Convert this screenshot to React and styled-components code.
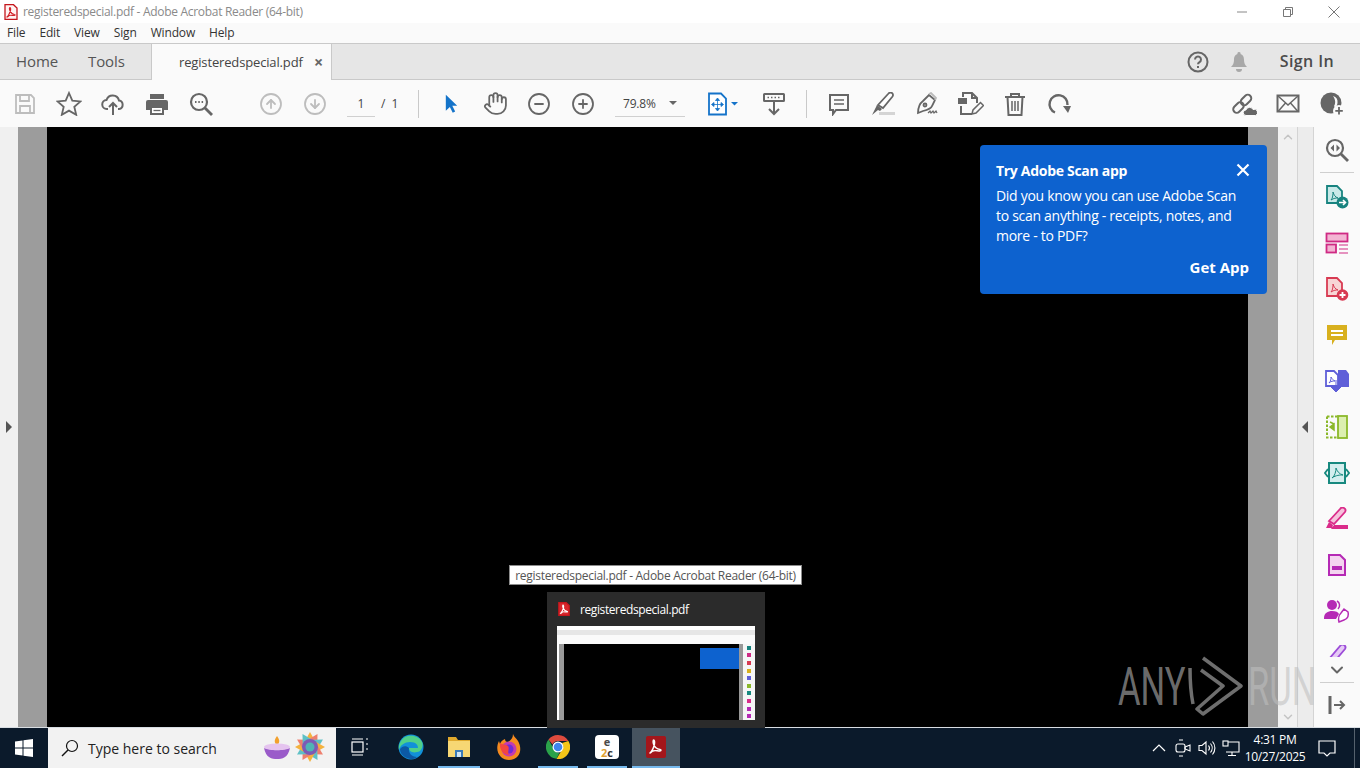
import React from "react";
import styled, { createGlobalStyle } from "styled-components";
import { Hand, CircleMinus, CirclePlus, CircleArrowUp, CircleArrowDown, ChevronUp, ChevronDown } from "lucide-react";

const GlobalStyle = createGlobalStyle`
  html, body { margin: 0; padding: 0; overflow: hidden; background: #000; }
  * { box-sizing: border-box; }
  body { font-family: "Open Sans", "Noto Sans", sans-serif; }
`;

const menuItems = ["File", "Edit", "View", "Sign", "Window", "Help"];

function PdfFile({ size = 16, solid }) {
  const mark = solid ? "#fff" : "#d2232a";
  return (
    <svg width={size} height={size} viewBox="0 0 16 16">
      <path d="M2 .7h8.5L14 4v11.3H2z" fill={solid ? "#d8262c" : "#fff3f2"} stroke="#c4161c" strokeWidth="1.3" />
      <path d="M4 13c1.500-1 2.500-3.500 3.500-6.500.3-1.500 0-3-.6-3s-.6 1.500 0 3c.8 2 2 3.500 4.500 4 .8 0 1 1-.2 1-2 0-4-.7-5 .1-1 .7-1.800 1.700-2.200 1.400z" fill="none" stroke={mark} strokeWidth="1.200" />
    </svg>
  );
}

function SaveIcon() {
  return (
    <svg width="22" height="22" viewBox="0 0 22 22" fill="none" stroke="#bdbdbd" strokeWidth="1.800">
      <path d="M2 2h15l3 3v15H2z" />
      <path d="M6 2v6h9V2M6 20v-7h10v7" />
    </svg>
  );
}

function StarIcon() {
  return (
    <svg width="26" height="25" viewBox="0 0 26 25" fill="none" stroke="#666" strokeWidth="1.800">
      <path d="M13 2l3.300 7.600 8.200.8-6.200 5.400 1.900 8L13 19.600 5.800 23.800l1.900-8L1.500 10.400l8.200-.8z" />
    </svg>
  );
}

function UploadIcon() {
  return (
    <svg width="24" height="24" viewBox="0 0 24 24" fill="none" stroke="#666" strokeWidth="2">
      <path d="M7 17H6a4.500 4.500 0 0 1-.5-9A6.500 6.500 0 0 1 18 8.500a4.300 4.300 0 0 1 0 8.500h-1" />
      <path d="M12 23V11M8 15l4-4 4 4" />
    </svg>
  );
}

function PrintIcon() {
  return (
    <svg width="24" height="24" viewBox="0 0 24 24">
      <path d="M5 2h14v5H5z" fill="#666" />
      <path d="M3 8h18a2 2 0 0 1 2 2v8h-4v-4H5v4H1v-8a2 2 0 0 1 2-2z" fill="#666" />
      <path d="M6 15h12v7H6z" fill="#fff" stroke="#666" strokeWidth="2" />
      <path d="M8.500 18.500h7" stroke="#666" strokeWidth="1.300" />
    </svg>
  );
}

function FindIcon({ mid = "dots" }) {
  return (
    <svg width="24" height="24" viewBox="0 0 24 24" fill="none" stroke="#666" strokeWidth="2.200">
      <circle cx="10" cy="10" r="8" />
      <path d="M16 16l7 7" strokeWidth="2.800" />
      {mid === "dots" ? (
        <path d="M6 10h1.500M9.300 10h1.500M12.600 10h1.500" strokeWidth="1.800" />
      ) : (
        <path d="M9 6.500L5.500 10 9 13.500zM11.500 6.500L15 10l-3.500 3.500z" fill="#666" strokeWidth="0" />
      )}
    </svg>
  );
}

function CursorIcon() {
  return (
    <svg width="13" height="20" viewBox="0 0 16 24" preserveAspectRatio="none">
      <path d="M1 1l14 13h-6l3.500 7-3 1.500L6 15.500 1 20z" fill="#1473c9" />
    </svg>
  );
}

function FitIcon() {
  return (
    <svg width="30" height="24" viewBox="0 0 30 24">
      <path d="M1 1.500h12l5 5v16H1z" fill="#fff" stroke="#1473c9" strokeWidth="1.800" />
      <path d="M9.500 7v11M4 12.500h11M9.500 6l-2 2.500h4zM9.500 19l-2-2.500h4zM3.500 12.500l2.500-2v4zM15.500 12.500l-2.500-2v4z" fill="#1473c9" stroke="#1473c9" strokeWidth=".8" />
      <path d="M23 10h7l-3.500 3.500z" fill="#1473c9" />
    </svg>
  );
}

function ReadIcon() {
  return (
    <svg width="24" height="24" viewBox="0 0 24 24" fill="none" stroke="#666" strokeWidth="2">
      <rect x="2" y="2" width="20" height="7" rx=".5" />
      <path d="M5.500 5.500h1.500M9 5.500h1.500M12.500 5.500h1.500M16 5.500h1.500" strokeWidth="1.600" />
      <path d="M12 10v12M7 17l5 5 5-5" />
    </svg>
  );
}

function CommentIcon() {
  return (
    <svg width="24" height="24" viewBox="0 0 24 24" fill="none" stroke="#666" strokeWidth="2">
      <path d="M3 3h18v15H9l-3 4v-4H3z" fill="#fafafa" />
      <path d="M7 8h10M7 12h10" strokeWidth="1.400" />
    </svg>
  );
}

function HighlightIcon() {
  return (
    <svg width="24" height="24" viewBox="0 0 24 24">
      <path d="M8 20h16v3H8z" fill="#d4d4d4" />
      <path d="M17.500 1.500a2.500 2.500 0 0 1 4 3L12 16l-5-3z" fill="#fff" stroke="#666" strokeWidth="1.800" />
      <path d="M6 13l5 4-2 2-2-1-6 5z" fill="#666" />
    </svg>
  );
}

function SignIcon() {
  return (
    <svg width="24" height="24" viewBox="0 0 24 24" fill="none" stroke="#666" strokeWidth="1.800">
      <path d="M14 3l6 5-3 6c-1 3-5 4-9 5l-5 2c0-4 1-9 5-12z" fill="#fafafa" />
      <path d="M14 2l2-1 5 5-1 2" stroke="#bbb" />
      <circle cx="10" cy="13" r="1.500" />
      <path d="M13 21l2-2 1 2 2-2 1 2 2-2 1 2" strokeWidth="1.200" />
    </svg>
  );
}

function EditIcon() {
  return (
    <svg width="26" height="25" viewBox="0 0 26 25" fill="none" stroke="#666" strokeWidth="2">
      <path d="M5 6V2h9l5 5v5M3 15v8h11" />
      <path d="M14 2v5h5" />
      <path d="M0 7h9v6H0z" fill="#666" strokeWidth="0" />
      <path d="M14 23l1-4 7.500-7.500 3 3L18 22z" fill="#fafafa" strokeWidth="1.500" />
    </svg>
  );
}

function TrashIcon() {
  return (
    <svg width="22" height="24" viewBox="0 0 22 24" fill="none" stroke="#666" strokeWidth="2">
      <path d="M1 5h20M7 5V2h8v3" />
      <path d="M3.500 5l1 18h13l1-18" />
      <path d="M8 9v10M11 9v10M14 9v10" strokeWidth="1.500" />
    </svg>
  );
}

function RotateIcon() {
  return (
    <svg width="24" height="24" viewBox="0 0 24 24" fill="none" stroke="#666" strokeWidth="2.400">
      <path d="M8 20.500A9 9 0 1 1 20.500 13" />
      <path d="M16 14h8l-3 7z" fill="#666" strokeWidth="0" />
    </svg>
  );
}

function LinkCloudIcon() {
  return (
    <svg width="26" height="24" viewBox="0 0 26 24" fill="none" stroke="#666" strokeWidth="2">
      <rect x="1.500" y="12" width="12" height="7" rx="3.500" transform="rotate(-45 7.500 15.500)" />
      <rect x="9" y="4.500" width="12" height="7" rx="3.500" transform="rotate(-45 15 8)" />
      <path d="M15 23.500a2.800 2.800 0 0 1 0-5.600 3.800 3.800 0 0 1 7-.4 3 3 0 0 1 2.600 6z" fill="#666" stroke="#fafafa" strokeWidth="1" />
    </svg>
  );
}

function MailIcon() {
  return (
    <svg width="24" height="20" viewBox="0 0 24 20" fill="none" stroke="#666" strokeWidth="2">
      <rect x="1.500" y="1.500" width="21" height="16" />
      <path d="M2 2l10 9 10-9M2 17.500l7.500-8.500M22 17.500L14.500 9" strokeWidth="1.500" />
    </svg>
  );
}

function UserPlusIcon() {
  return (
    <svg width="24" height="24" viewBox="0 0 24 24">
      <circle cx="11" cy="11" r="10.500" fill="#666" />
      <path d="M13 4a6.500 6.500 0 0 1 4.500 7c-.3 2-1 3.500-2.500 4.500l-1-1.500c1.500-2 2-6 -1-10z" fill="#fafafa" />
      <circle cx="19" cy="19" r="6" fill="#fafafa" />
      <path d="M19 15v7.500M15.300 18.800h7.500" stroke="#666" strokeWidth="1.800" />
    </svg>
  );
}

function HelpIcon() {
  return (
    <svg width="22" height="22" viewBox="0 0 22 22" fill="none" stroke="#666" strokeWidth="2">
      <circle cx="11" cy="11" r="9.500" />
      <path d="M8 8.500a3 3 0 1 1 4.500 2.600c-1 .6-1.500 1.100-1.500 2.200" />
      <path d="M11 15v2" />
    </svg>
  );
}

function BellIcon() {
  return (
    <svg width="18" height="20" viewBox="0 0 18 20">
      <path d="M9 0a1.500 1.500 0 0 1 1.500 2c3 1 3.500 3.500 3.500 6 0 3 1 5 3 7H1c2-2 3-4 3-7 0-2.500.5-5 3.500-6A1.500 1.500 0 0 1 9 0zM6 17h6a3 3 0 0 1-6 0z" fill="#a8a8a8" />
    </svg>
  );
}

const railIcons = [
  <svg key="export" width="24" height="24" viewBox="0 0 24 24">
    <path d="M2 1h10l5 5v12H2z" fill="#c8e9e8" stroke="#17837f" strokeWidth="1.800" />
    <path d="M6 15c2-2 2-6 2-8 1 3 2 5 5 6-2 0-4 0-7 2z" fill="none" stroke="#17837f" />
    <circle cx="17.500" cy="17.500" r="6" fill="#17837f" />
    <path d="M14 17.500h6M18 15l2.500 2.500L18 20" stroke="#fff" strokeWidth="1.600" fill="none" />
  </svg>,
  <svg key="organize" width="24" height="24" viewBox="0 0 24 24">
    <rect x="1.500" y="2.500" width="21" height="8" fill="#f3b4d3" stroke="#cf2a84" strokeWidth="1.800" />
    <rect x="1.500" y="13.500" width="9.500" height="8" fill="#f3b4d3" stroke="#cf2a84" strokeWidth="1.800" />
    <path d="M14 14h9M14 18h9M14 22h9" stroke="#cf2a84" strokeWidth="1.200" />
  </svg>,
  <svg key="create" width="24" height="24" viewBox="0 0 24 24">
    <path d="M2 1h10l5 5v13H2z" fill="#f7d5d5" stroke="#d83a52" strokeWidth="1.800" />
    <path d="M6 15c2-2 2-6 2-8 1 3 2 5 5 6-2 0-4 0-7 2z" fill="none" stroke="#d83a52" />
    <circle cx="17.500" cy="18" r="5.800" fill="#d83a52" />
    <path d="M14.500 18h6M17.500 15v6" stroke="#fff" strokeWidth="1.800" />
  </svg>,
  <svg key="comment" width="22" height="22" viewBox="0 0 22 22">
    <path d="M1 1h20v15H9l-3 5v-5H1z" fill="#d8b01e" />
    <path d="M5 7h12M5 11h12" stroke="#fff" strokeWidth="2" />
  </svg>,
  <svg key="combine" width="26" height="24" viewBox="0 0 26 24">
    <path d="M14 1h8l3 4v13H14z" fill="#5f5fd8" />
    <path d="M2 2h8l4 4v11H2z" fill="#fff" stroke="#5f5fd8" strokeWidth="1.800" />
    <path d="M5 14c2-2 2-4 2-6 1 2 2 3 4 4-2 0-4 0-6 2z" fill="none" stroke="#5f5fd8" />
    <path d="M12 11v8M7 18h10l-5 5z" fill="#5f5fd8" stroke="#5f5fd8" />
  </svg>,
  <svg key="compress" width="24" height="24" viewBox="0 0 24 24" fill="none">
    <path d="M2 1.500h12v6M2 1.500v21h12" stroke="#8bb82a" strokeWidth="2" strokeDasharray="2.500 1.500" />
    <rect x="13" y="1" width="9" height="22" fill="#dcefb0" stroke="#8bb82a" strokeWidth="1.800" />
    <path d="M9 9L5 12l4 3zM5 7l4 2" fill="#8bb82a" stroke="#8bb82a" strokeWidth="1.500" />
  </svg>,
  <svg key="fit" width="26" height="24" viewBox="0 0 26 24" fill="none">
    <path d="M5 2h16v20H5z" fill="#d4eeee" stroke="#17897f" strokeWidth="2" />
    <path d="M8 17c3-2 4-7 4-10 1 3 3 6 7 7-3 0-7 0-11 3z" stroke="#17897f" />
    <path d="M4 8L1 12l3 4M22 8l3 4-3 4" stroke="#17897f" strokeWidth="1.800" />
  </svg>,
  <svg key="fill" width="24" height="24" viewBox="0 0 24 24">
    <path d="M15 2a2.500 2.500 0 0 1 5 3L9 17l-5-3z" fill="#f6c2dc" stroke="#da2c8a" strokeWidth="1.800" />
    <path d="M4 15l4 3-1 3H1zM9 18h14v4H6z" fill="#da2c8a" />
  </svg>,
  <svg key="page" width="20" height="22" viewBox="0 0 20 22">
    <path d="M2 1h11l5 5v15H2z" fill="#f4d4f0" stroke="#b52ab5" strokeWidth="2" />
    <path d="M5 12h10v4H5z" fill="#b52ab5" />
  </svg>,
  <svg key="request" width="26" height="24" viewBox="0 0 26 24">
    <circle cx="8" cy="6" r="5" fill="#b52ab5" />
    <path d="M0 19c0-5 4-7 8-7s6 1 7 3l-3 5H0z" fill="#b52ab5" />
    <path d="M20 10l4 3c1 3 0 7-4 8l-5 2c-1-3 0-7 2-9z" fill="#fff" stroke="#b52ab5" strokeWidth="1.500" />
    <path d="M13 2a5 5 0 0 1 1 8" stroke="#b52ab5" strokeWidth="1.500" fill="none" />
  </svg>,
  <svg key="clip" width="24" height="24" viewBox="0 0 24 24">
    <path d="M15 1a2.500 2.500 0 0 1 5 3L9 17l-5-3z" fill="#e5c9f5" stroke="#9c4cd8" strokeWidth="1.800" />
    <path d="M4 15l4 3-1 3H1z" fill="#9c4cd8" />
  </svg>,
];

function WindowsLogo() {
  return (
    <svg width="18" height="18" viewBox="0 0 18 18">
      <path d="M0 2.500l7.500-1v7H0zM8.500 1.300L18 0v8.500H8.500zM0 9.500h7.500v7L0 15.500zM8.500 9.500H18V18l-9.500-1.300z" fill="#fff" />
    </svg>
  );
}

function Magnifier() {
  return (
    <svg width="18" height="18" viewBox="0 0 18 18" fill="none" stroke="#111" strokeWidth="1.200">
      <circle cx="11" cy="7" r="5.500" />
      <path d="M7 11l-6 6" strokeWidth="1.500" />
    </svg>
  );
}

function DiyaArt() {
  return (
    <svg width="66" height="32" viewBox="0 0 66 32">
      <path d="M14 4c3 4 3 7 0 9-3-2-3-5 0-9z" fill="#f2a02d" />
      <ellipse cx="14" cy="15" rx="13" ry="3.500" fill="#e5c4ef" />
      <path d="M1 16c2 10 8 11 13 11s11-1 13-11c-5 3-21 3-26 0z" fill="#9a5bc9" />
      <g transform="translate(47 15)">
        {[0, 30, 60, 90, 120, 150, 180, 210, 240, 270, 300, 330].map((a, i) => (
          <path key={a} d="M0-15l5 9H-5z" fill={["#f4b23e", "#ee7f6e", "#5ec1c6"][i % 3]} transform={`rotate(${a})`} />
        ))}
        <circle r="8" fill="#7c5bb5" />
        <circle r="4.500" fill="#4fb4b4" />
      </g>
    </svg>
  );
}

function TaskViewIcon() {
  return (
    <svg width="18" height="18" viewBox="0 0 18 18" fill="none" stroke="#fff" strokeWidth="1.200">
      <rect x="1" y="4" width="11" height="10" />
      <path d="M1 1h11M1 17h11M15 1h2M15 6h2M15 11h2" />
    </svg>
  );
}

function EdgeIcon() {
  return (
    <svg width="26" height="26" viewBox="0 0 26 26">
      <circle cx="13" cy="13" r="12.500" fill="#1291d9" />
      <path d="M24.500 9C22 2 13 0 7 3 2 6 0 12 1 16c1-5 6-8 11-8 6 0 8 3 8 6h-9c0 4 5 6 11 3 2-2 3-5 2.500-8z" fill="#4fd08a" />
      <path d="M11 14c-1 5 3 9 8 9-2 2-6 3-10 1C4 22 2 18 2 15c2-3 6-4 9-1z" fill="#0c59a4" />
    </svg>
  );
}

function FolderIcon() {
  return (
    <svg width="24" height="24" viewBox="0 0 24 24">
      <path d="M1 2h8l2 3h12v17H1z" fill="#e0a92d" />
      <path d="M1 6h22v16H1z" fill="#f7d774" />
      <path d="M8 15h8v7H8z" fill="#3a7ab8" />
      <path d="M10 17h4v5h-4z" fill="#cfe3f2" />
    </svg>
  );
}

function FirefoxIcon() {
  return (
    <svg width="24" height="26" viewBox="0 0 24 26">
      <path d="M16 0c1 3 3 4 5 7 3 5 3 11 0 15-4 5-13 5-17 1C0 19-1 13 2 7l1 3c1-3 3-4 5-5 0 2 1 3 3 3 3-2 5-4 5-8z" fill="#f58a1f" />
      <circle cx="12" cy="15" r="7.500" fill="#c33bb0" />
      <circle cx="12" cy="15" r="4.500" fill="#6f2bd6" />
      <path d="M3 9c2 2 6 1 8 3 2 3-1 5 1 9-5 0-10-5-9-12z" fill="#f2473f" />
    </svg>
  );
}

function ChromeIcon() {
  return (
    <svg width="24" height="24" viewBox="0 0 24 24">
      <path d="M12 0a12 12 0 0 1 10.400 6H12a6 6 0 0 0-5.500 3.500L2.500 4.500A12 12 0 0 1 12 0z" fill="#dd4b3e" />
      <path d="M2.500 4.500l4.800 8.500a6 6 0 0 0 6.200 4.800l-3 6A12 12 0 0 1 2.500 4.500z" fill="#2aa24a" />
      <path d="M22.400 6A12 12 0 0 1 10.500 24l5-8.500A6 6 0 0 0 16 8z" fill="#f5c518" />
      <circle cx="12" cy="12" r="5.500" fill="#fff" />
      <circle cx="12" cy="12" r="4.300" fill="#3f85ee" />
    </svg>
  );
}

function AcrobatTile() {
  return (
    <svg width="22" height="22" viewBox="0 0 22 22">
      <rect x="1" y="0" width="20" height="22" rx="2" fill="#a3161b" />
      <path d="M5 17c2-1.500 3.500-5 4.500-9 .3-2 0-4-.8-4s-.8 2-.2 4c1 3 3 5 6.500 5.500 1.300.2 1.500 1.500-.2 1.500-2.500 0-5-1-7 0-1.300.7-2.300 2.400-2.800 2z" fill="none" stroke="#fff" strokeWidth="1.400" />
    </svg>
  );
}

function TrayCamera() {
  return (
    <svg width="18" height="20" viewBox="0 0 18 20" fill="none" stroke="#fff" strokeWidth="1.100">
      <rect x="2" y="6" width="9" height="8" rx="2" />
      <path d="M11 9l5-2v6l-5-2zM5 2h4M5 18h4" />
    </svg>
  );
}

function TraySpeaker() {
  return (
    <svg width="18" height="18" viewBox="0 0 18 18" fill="none" stroke="#fff" strokeWidth="1.100">
      <path d="M1 6.500h3L8 3v12l-4-3.500H1z" />
      <path d="M10.500 6.500a4 4 0 0 1 0 5M12.500 4.500a7 7 0 0 1 0 9M14.500 2.500a10 10 0 0 1 0 13" />
    </svg>
  );
}

function TrayNetwork() {
  return (
    <svg width="18" height="18" viewBox="0 0 18 18" fill="none" stroke="#fff" strokeWidth="1.100">
      <path d="M4 3h13v10H4M10 13v3M6 16.500h8" />
      <rect x="1" y="2" width="5" height="5" fill="#0b1a2b" />
    </svg>
  );
}

function TrayNote() {
  return (
    <svg width="18" height="18" viewBox="0 0 18 18" fill="none" stroke="#fff" strokeWidth="1.200">
      <path d="M1 2h16v12h-5l-3 3-3-3H1z" />
    </svg>
  );
}

function PlayMark() {
  return (
    <svg width="56" height="60" viewBox="0 0 56 60" fill="none" stroke="rgba(190,190,190,.58)" strokeWidth="3.500" strokeLinejoin="round">
      <path d="M16 2l38 28-38 28-6-5 26-23L14 14" />
      <path d="M3 12c0 12 1 26 3 36" />
    </svg>
  );
}

export default function App() {
  return (
    <>
      <GlobalStyle />
      <Window>
        <TitleBar>
          <PdfFile />
          <TitleText>registeredspecial.pdf - Adobe Acrobat Reader (64-bit)</TitleText>
          <WindowControls>
            <ControlButton>
              <svg width="12" height="12" viewBox="0 0 12 12"><path d="M1 6h10" stroke="#888" /></svg>
            </ControlButton>
            <ControlButton>
              <svg width="12" height="12" viewBox="0 0 12 12" fill="none" stroke="#777"><path d="M1.500 3.500h7v7h-7zM3.500 3.500v-2h7v7h-2" /></svg>
            </ControlButton>
            <ControlButton>
              <svg width="12" height="12" viewBox="0 0 12 12" stroke="#777"><path d="M.5.500l11 11M11.500.500l-11 11" /></svg>
            </ControlButton>
          </WindowControls>
        </TitleBar>

        <MenuBar>
          {menuItems.map((item) => (
            <MenuItem key={item}>{item}</MenuItem>
          ))}
        </MenuBar>

        <TabBar>
          <NavTab $w={72}>Home</NavTab>
          <NavTab $w={63}>Tools</NavTab>
          <DocTab>
            registeredspecial.pdf
            <TabClose>×</TabClose>
          </DocTab>
          <TabActions>
            <HelpIcon />
            <BellIcon />
            <SignIn>Sign In</SignIn>
          </TabActions>
        </TabBar>

        <Toolbar>
          <ToolGroup>
            <ToolButton><SaveIcon /></ToolButton>
            <ToolButton><StarIcon /></ToolButton>
            <ToolButton><UploadIcon /></ToolButton>
            <ToolButton><PrintIcon /></ToolButton>
            <ToolButton><FindIcon /></ToolButton>
          </ToolGroup>
          <ToolGroup $ml={26}>
            <ToolButton><CircleArrowUp size={24} color="#bdbdbd" strokeWidth={1.8} /></ToolButton>
            <ToolButton><CircleArrowDown size={24} color="#bdbdbd" strokeWidth={1.8} /></ToolButton>
          </ToolGroup>
          <PageInput>1</PageInput>
          <PageTotal>/ 1</PageTotal>
          <ToolDivider $ml={20} />
          <ToolGroup $ml={10}>
            <ToolButton><CursorIcon /></ToolButton>
            <ToolButton><Hand size={25} color="#666" strokeWidth={1.7} /></ToolButton>
            <ToolButton><CircleMinus size={24} color="#666" strokeWidth={1.8} /></ToolButton>
            <ToolButton><CirclePlus size={24} color="#666" strokeWidth={1.8} /></ToolButton>
          </ToolGroup>
          <ZoomBox>
            79.8%
            <Caret />
          </ZoomBox>
          <ToolGroup $ml={16}>
            <ToolButton><FitIcon /></ToolButton>
          </ToolGroup>
          <ToolGroup $ml={7}>
            <ToolButton><ReadIcon /></ToolButton>
          </ToolGroup>
          <ToolDivider $ml={10} />
          <ToolGroup $ml={10}>
            <ToolButton><CommentIcon /></ToolButton>
            <ToolButton><HighlightIcon /></ToolButton>
            <ToolButton><SignIcon /></ToolButton>
            <ToolButton><EditIcon /></ToolButton>
            <ToolButton><TrashIcon /></ToolButton>
            <ToolButton><RotateIcon /></ToolButton>
          </ToolGroup>
          <ShareGroup>
            <ToolButton><LinkCloudIcon /></ToolButton>
            <ToolButton><MailIcon /></ToolButton>
            <ToolButton><UserPlusIcon /></ToolButton>
          </ShareGroup>
        </Toolbar>

        <Workspace>
          <SidePanel>
            <PanelArrow $dir="right" />
          </SidePanel>
          <PageGutter $w={29} />
          <PageSheet />
          <PageGutter $w={30} />
          <ScrollTrack>
            <ChevronUp size={14} color="#c4c4c4" strokeWidth={2.5} />
            <ChevronDown size={14} color="#c4c4c4" strokeWidth={2.5} />
          </ScrollTrack>
          <CollapseStrip>
            <PanelArrow $dir="left" />
          </CollapseStrip>
          <ToolRail>
            <RailSlot $h={45}><FindIcon mid="arrows" /></RailSlot>
            <RailRule />
            <RailList>
              {railIcons.map((icon) => (
                <RailSlot key={icon.key} $h={46}>{icon}</RailSlot>
              ))}
            </RailList>
            <RailMore>
              <ChevronDown size={20} color="#666" strokeWidth={2.4} />
            </RailMore>
            <RailRule />
            <RailSlot $h={44}>
              <svg width="18" height="20" viewBox="0 0 18 20" fill="none" stroke="#666" strokeWidth="2">
                <path d="M2 1v18" strokeWidth="3" />
                <path d="M6 10h10M12 6l4 4-4 4" />
              </svg>
            </RailSlot>
          </ToolRail>
        </Workspace>

        <Taskbar>
          <StartButton><WindowsLogo /></StartButton>
          <SearchBox>
            <Magnifier />
            <SearchLabel>Type here to search</SearchLabel>
            <DiyaArt />
          </SearchBox>
          <TaskSlot $w={48}><TaskViewIcon /></TaskSlot>
          <TaskSlot $w={54}><EdgeIcon /></TaskSlot>
          <TaskSlot $w={42} $open><FolderIcon /></TaskSlot>
          <TaskSlot $w={58}><FirefoxIcon /></TaskSlot>
          <TaskSlot $w={40} $open><ChromeIcon /></TaskSlot>
          <TaskSlot $w={40} $ml={9} $open>
            <E2cTile>
              <E2cLetter $c="#4a4a4a">e</E2cLetter>
              <E2cLetter $c="#e0a030">2</E2cLetter>
              <E2cLetter $c="#333">c</E2cLetter>
            </E2cTile>
          </TaskSlot>
          <TaskSlot $w={48} $ml={5} $open $active><AcrobatTile /></TaskSlot>
          <Tray>
            <TrayIcon $w={24}>
              <svg width="14" height="8" viewBox="0 0 14 8" fill="none" stroke="#fff" strokeWidth="1.200"><path d="M1 7l6-6 6 6" /></svg>
            </TrayIcon>
            <TrayIcon $w={24}><TrayCamera /></TrayIcon>
            <TrayIcon $w={24}><TraySpeaker /></TrayIcon>
            <TrayIcon $w={24}><TrayNetwork /></TrayIcon>
            <Clock>
              <span>4:31 PM</span>
              <span>10/27/2025</span>
            </Clock>
            <TrayIcon $w={40}><TrayNote /></TrayIcon>
            <DesktopEdge />
          </Tray>
        </Taskbar>

        <ScanPopup>
          <PopupHead>
            <PopupTitle>Try Adobe Scan app</PopupTitle>
            <svg width="14" height="14" viewBox="0 0 14 14" stroke="#fff" strokeWidth="2.200"><path d="M1.500 1.500l11 11M12.500 1.500l-11 11" /></svg>
          </PopupHead>
          <PopupBody>Did you know you can use Adobe Scan to scan anything - receipts, notes, and more - to PDF?</PopupBody>
          <PopupAction>Get App</PopupAction>
        </ScanPopup>

        <Tooltip>registeredspecial.pdf - Adobe Acrobat Reader (64-bit)</Tooltip>

        <TaskPreview>
          <PreviewHead>
            <PdfFile size={14} solid />
            <span>registeredspecial.pdf</span>
          </PreviewHead>
          <PreviewShot>
            <ShotChrome />
            <ShotBody>
              <ShotGutter $w={2} $bg="#fff" />
              <ShotGutter $w={5} $bg="#999" />
              <ShotPage>
                <ShotPopup />
              </ShotPage>
              <ShotGutter $w={4} $bg="#999" />
              <ShotRail>
                {["#17837f", "#cf2a84", "#d83a52", "#d8b01e", "#5f5fd8", "#8bb82a", "#17897f", "#da2c8a", "#b52ab5", "#b52ab5"].map((c, i) => (
                  <ShotDot key={i} $c={c} />
                ))}
              </ShotRail>
            </ShotBody>
          </PreviewShot>
        </TaskPreview>

        <Watermark>
          <WatermarkWord>ANY</WatermarkWord>
          <PlayMark />
          <WatermarkWord>RUN</WatermarkWord>
        </Watermark>
      </Window>
    </>
  );
}

const Window = styled.div`
  position: relative;
  width: 1360px;
  height: 768px;
  display: flex;
  flex-direction: column;
  overflow: hidden;
  background: #fff;
`;

const TitleBar = styled.div`
  height: 23px;
  display: flex;
  align-items: center;
  padding-left: 3px;
  background: #fff;
`;

const TitleText = styled.span`
  margin-left: 4px;
  font-size: 12px;
  letter-spacing: -0.3px;
  color: #8a8a8a;
  white-space: nowrap;
`;

const WindowControls = styled.div`
  margin-left: auto;
  display: flex;
  padding-right: 3px;
`;

const ControlButton = styled.div`
  width: 46px;
  height: 22px;
  display: flex;
  align-items: center;
  justify-content: center;
`;

const MenuBar = styled.div`
  height: 21px;
  display: flex;
  align-items: center;
  gap: 14px;
  padding: 0 0 2px 7px;
  background: #fafafa;
  border-bottom: 1px solid #c9c9c9;
`;

const MenuItem = styled.span`
  font-size: 12px;
  letter-spacing: -0.15px;
  color: #333;
`;

const TabBar = styled.div`
  height: 36px;
  display: flex;
  align-items: stretch;
  background: #e6e6e6;
  border-bottom: 1px solid #c9c9c9;
  padding-left: 16px;
`;

const NavTab = styled.div`
  width: ${(p) => p.$w}px;
  padding-bottom: 1px;
  display: flex;
  align-items: center;
  font-size: 15px;
  letter-spacing: -0.1px;
  color: #555;
`;

const DocTab = styled.div`
  width: 181px;
  margin-bottom: -1px;
  padding: 0 0 1px 27px;
  display: flex;
  align-items: center;
  font-size: 13px;
  letter-spacing: -0.15px;
  color: #444;
  background: #fafafa;
  border-left: 1px solid #c9c9c9;
  border-right: 1px solid #c9c9c9;
  white-space: nowrap;
`;

const TabClose = styled.span`
  margin-left: auto;
  margin-right: 8px;
  font-size: 16px;
  font-weight: 700;
  color: #666;
`;

const TabActions = styled.div`
  margin-left: auto;
  display: flex;
  align-items: center;
  padding-right: 26px;
  gap: 21px;
`;

const SignIn = styled.span`
  margin-left: 11px;
  padding-bottom: 1px;
  font-size: 16px;
  letter-spacing: 0.4px;
  font-weight: 600;
  color: #4b4b4b;
`;

const Toolbar = styled.div`
  height: 47px;
  display: flex;
  align-items: center;
  padding: 0 6px 0 3px;
  background: #fafafa;
`;

const ToolGroup = styled.div`
  display: flex;
  margin-left: ${(p) => p.$ml || 0}px;
`;

const ShareGroup = styled(ToolGroup)`
  margin-left: auto;
`;

const ToolButton = styled.div`
  width: 44px;
  height: 40px;
  display: flex;
  align-items: center;
  justify-content: center;
`;

const ToolDivider = styled.div`
  width: 1px;
  height: 28px;
  margin-left: ${(p) => p.$ml || 0}px;
  background: #c9c9c9;
`;

const PageInput = styled.div`
  width: 28px;
  height: 27px;
  margin-left: 10px;
  display: flex;
  align-items: center;
  justify-content: center;
  font-size: 12px;
  color: #444;
  border-bottom: 1px solid #d0d0d0;
`;

const PageTotal = styled.span`
  margin-left: 6px;
  width: 17px;
  font-size: 12px;
  word-spacing: 3px;
  color: #444;
  white-space: nowrap;
`;

const ZoomBox = styled.div`
  width: 70px;
  height: 27px;
  margin-left: 10px;
  padding: 0 8px;
  display: flex;
  align-items: center;
  justify-content: space-between;
  font-size: 12px;
  letter-spacing: -0.2px;
  color: #444;
  border-bottom: 1px solid #d0d0d0;
`;

const Caret = styled.span`
  width: 0;
  height: 0;
  border-left: 4px solid transparent;
  border-right: 4px solid transparent;
  border-top: 4px solid #666;
`;

const Workspace = styled.div`
  height: 601px;
  display: flex;
  border-bottom: 1px solid #d8dde2;
`;

const SidePanel = styled.div`
  width: 18px;
  display: flex;
  align-items: center;
  justify-content: center;
  background: #f0f0f0;
`;

const PanelArrow = styled.span`
  width: 0;
  height: 0;
  border-top: 6px solid transparent;
  border-bottom: 6px solid transparent;
  ${(p) =>
    p.$dir === "right"
      ? "border-left: 6px solid #555;"
      : "border-right: 6px solid #555;"}
`;

const PageGutter = styled.div`
  width: ${(p) => p.$w}px;
  background: #9c9c9c;
`;

const PageSheet = styled.div`
  flex: 1;
  background: #000;
`;

const ScrollTrack = styled.div`
  width: 19px;
  padding: 3px 0;
  display: flex;
  flex-direction: column;
  align-items: center;
  justify-content: space-between;
  background: #f1f1f1;
`;

const CollapseStrip = styled.div`
  width: 16px;
  padding-right: 2px;
  display: flex;
  align-items: center;
  justify-content: center;
  background: #ececec;
  border-left: 1px solid #d4d4d4;
`;

const ToolRail = styled.div`
  width: 47px;
  display: flex;
  flex-direction: column;
  background: #fafafa;
  border-left: 1px solid #d4d4d4;
`;

const RailSlot = styled.div`
  flex: none;
  height: ${(p) => p.$h}px;
  display: flex;
  align-items: center;
  justify-content: center;
`;

const RailRule = styled.div`
  flex: none;
  height: 1px;
  margin: 0 6px;
  background: #cfcfcf;
`;

const RailList = styled.div`
  height: 485px;
  padding-top: 1px;
  overflow: hidden;
`;

const RailMore = styled.div`
  height: 25px;
  display: flex;
  align-items: center;
  justify-content: center;
  background: #fafafa;
`;

const Taskbar = styled.div`
  flex: 1;
  display: flex;
  align-items: stretch;
  background: #0b1a2b;
`;

const StartButton = styled.div`
  width: 48px;
  display: flex;
  align-items: center;
  justify-content: center;
`;

const SearchBox = styled.div`
  width: 288px;
  padding: 0 7px 0 13px;
  display: flex;
  align-items: center;
  background: #f2f2f2;
`;

const SearchLabel = styled.span`
  flex: 1;
  margin-left: 9px;
  font-size: 14px;
  color: #222;
  white-space: nowrap;
`;

const TaskSlot = styled.div`
  width: ${(p) => p.$w}px;
  margin-left: ${(p) => p.$ml || 0}px;
  display: flex;
  align-items: center;
  justify-content: center;
  background: ${(p) => (p.$active ? "#46535f" : "transparent")};
  border-bottom: 2px solid ${(p) => (p.$open ? "#76b9ed" : "transparent")};
`;

const E2cTile = styled.div`
  width: 24px;
  height: 24px;
  border-radius: 4px;
  background: #fff;
  display: flex;
  flex-wrap: wrap;
  align-content: center;
  justify-content: center;
`;

const E2cLetter = styled.span`
  font-size: 11px;
  line-height: 11px;
  font-weight: 700;
  color: ${(p) => p.$c};
  &:first-child {
    width: 100%;
    text-align: center;
  }
`;

const Tray = styled.div`
  margin-left: auto;
  display: flex;
  align-items: stretch;
`;

const TrayIcon = styled.div`
  width: ${(p) => p.$w}px;
  display: flex;
  align-items: center;
  justify-content: center;
`;

const Clock = styled.div`
  width: 64px;
  display: flex;
  flex-direction: column;
  align-items: center;
  justify-content: center;
  font-size: 12px;
  letter-spacing: -0.3px;
  line-height: 17px;
  color: #fff;
  white-space: nowrap;
`;

const DesktopEdge = styled.div`
  width: 8px;
  margin-right: 5px;
  border-right: 1px solid #55616d;
`;

const ScanPopup = styled.div`
  position: absolute;
  left: 980px;
  top: 145px;
  width: 287px;
  height: 149px;
  padding: 15px 16px 0;
  border-radius: 4px;
  background: #0d62cf;
  color: #fff;
`;

const PopupHead = styled.div`
  display: flex;
  align-items: center;
  justify-content: space-between;
  height: 20px;
  padding-right: 1px;
`;

const PopupTitle = styled.span`
  font-size: 14px;
  letter-spacing: -0.3px;
  font-weight: 700;
`;

const PopupBody = styled.p`
  margin: 6px 0 0;
  font-size: 14px;
  letter-spacing: -0.29px;
  line-height: 20px;
`;

const PopupAction = styled.div`
  margin: 11px 2px 0 0;
  text-align: right;
  font-size: 15px;
  font-weight: 700;
`;

const Tooltip = styled.div`
  position: absolute;
  left: 509px;
  top: 565px;
  width: 293px;
  height: 20px;
  display: flex;
  align-items: center;
  justify-content: center;
  background: #fff;
  border: 1px solid #8c8c8c;
  font-size: 12px;
  letter-spacing: -0.28px;
  color: #555;
  white-space: nowrap;
`;

const TaskPreview = styled.div`
  position: absolute;
  left: 547px;
  top: 592px;
  width: 218px;
  height: 136px;
  padding: 0 10px;
  background: #2b2b2b;
`;

const PreviewHead = styled.div`
  height: 34px;
  display: flex;
  align-items: center;
  gap: 9px;
  font-size: 12px;
  letter-spacing: -0.4px;
  color: #fff;
  white-space: nowrap;
`;

const PreviewShot = styled.div`
  width: 198px;
  height: 94px;
  display: flex;
  flex-direction: column;
  background: #fff;
`;

const ShotChrome = styled.div`
  height: 18px;
  background: linear-gradient(#fff 0 4px, #e6e6e6 4px 9px, #fafafa 9px);
`;

const ShotBody = styled.div`
  flex: 1;
  display: flex;
`;

const ShotGutter = styled.div`
  width: ${(p) => p.$w}px;
  background: ${(p) => p.$bg};
`;

const ShotPage = styled.div`
  flex: 1;
  display: flex;
  justify-content: flex-end;
  padding-top: 4px;
  background: #000;
`;

const ShotPopup = styled.div`
  width: 42px;
  height: 21px;
  margin-right: -3px;
  background: #0d62cf;
`;

const ShotRail = styled.div`
  width: 12px;
  display: flex;
  flex-direction: column;
  align-items: center;
  justify-content: space-around;
  background: #f6f6f6;
`;

const ShotDot = styled.span`
  width: 4px;
  height: 4px;
  background: ${(p) => p.$c};
`;

const Watermark = styled.div`
  position: absolute;
  left: 1118px;
  top: 656px;
  width: 194px;
  height: 60px;
  display: flex;
  align-items: center;
  justify-content: space-between;
  pointer-events: none;
`;

const WatermarkWord = styled.span`
  display: inline-block;
  width: 64px;
  font-family: "Roboto", sans-serif;
  font-weight: 400;
  font-size: 54px;
  color: rgba(190, 190, 190, 0.58);
  transform: scaleX(0.64);
  transform-origin: left center;
  white-space: nowrap;
`;
